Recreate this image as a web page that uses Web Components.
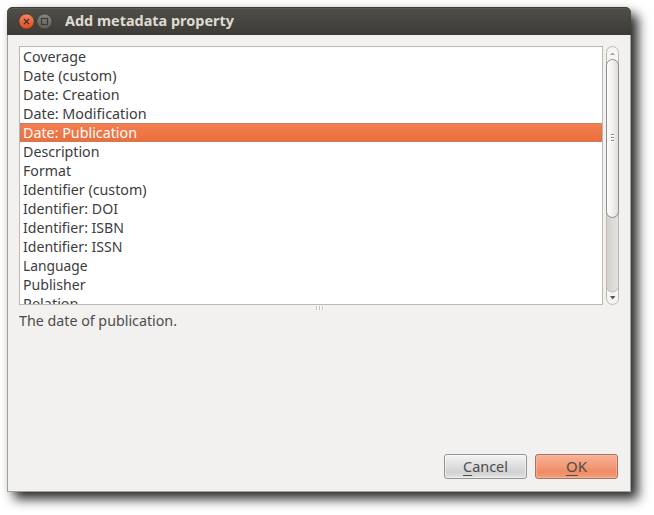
<!DOCTYPE html>
<html lang="en"><head><meta charset="utf-8"><title>Add metadata property</title>
<style>html,body{margin:0;background:#fff;width:654px;height:515px;overflow:hidden}</style></head>
<body>
<metadata-dialog></metadata-dialog>
<script>
function define(name, html, ready) {
  customElements.define(name, class extends HTMLElement {
    constructor() {
      super();
      this.attachShadow({ mode: 'open' }).innerHTML = html;
    }
    connectedCallback() { if (ready) ready(this); }
  });
}

// Text condensed or widened to the width given in the "w" attribute.
define('fit-text', `<style>
:host{display:inline-block;white-space:nowrap}
span{display:inline-block;transform-origin:0 50%}
span.u::first-letter{text-decoration:underline;text-decoration-thickness:1px;text-underline-offset:3px}
</style><span><slot></slot></span>`, el => {
  const s = el.shadowRoot.querySelector('span');
  const w = +el.getAttribute('w');
  s.textContent = el.textContent;
  if (el.hasAttribute('mnemonic')) s.className = 'u';
  el.style.width = w + 'px';
  s.style.transform = `scaleX(${w / s.getBoundingClientRect().width})`;
});

define('title-bar', `<style>
:host{display:flex;align-items:center;height:28px;box-sizing:border-box;padding:0 0 1px 11px;border-radius:6px 6px 0 0;
background:linear-gradient(#504f48,#3c3b37);box-shadow:inset 0 1px #3d3c38,inset 0 2px #5d5b54;color:#dfdbd2;font-weight:700}
svg{display:block;margin:1px 11px 0 0}
</style>
<svg width="36" height="20" viewBox="0 0 36 20"><defs>
<linearGradient id="r" x2="0" y2="1"><stop stop-color="#f58565"/><stop offset="1" stop-color="#df4b1c"/></linearGradient>
<linearGradient id="g" x2="0" y2="1"><stop stop-color="#85837b"/><stop offset="1" stop-color="#605e57"/></linearGradient></defs>
<circle cx="8.5" cy="10.5" r="7.6" fill="url(#r)" stroke="#35332f" stroke-width=".6"/>
<path d="M5.9 7.9l5.2 5.2M11.1 7.9l-5.2 5.2" stroke="#42281e" stroke-width="1.3"/>
<circle cx="26.5" cy="10.5" r="7.6" fill="url(#g)" stroke="#35332f" stroke-width=".6"/>
<rect x="23.5" y="7.5" width="6" height="6" fill="none" stroke="#3b3935" stroke-width="1.1"/></svg>
<slot></slot>`);

define('list-row', `<style>
:host{display:block;height:19px;line-height:19px;padding-left:3px;box-sizing:border-box}
:host([selected]){background:linear-gradient(#f47f50,#ec6e3c);color:#fff;outline:1px dotted #a4877b;outline-offset:-1px}
</style><slot></slot>`);

define('list-box', `<style>
:host{display:block;flex:none;box-sizing:border-box;width:584px;height:259px;border:1px solid #bbb8b3;background:#fff;overflow:hidden;color:#3c3c3c}
</style><slot></slot>`);

define('scroll-bar', `<style>
:host{display:block;flex:none;width:13px;height:259px}svg{display:block}
</style><svg width="13" height="259" viewBox="0 0 13 259"><defs>
<linearGradient id="t"><stop stop-color="#d4d1cd"/><stop offset="1" stop-color="#e4e1de"/></linearGradient>
<linearGradient id="h"><stop stop-color="#fff"/><stop offset=".5" stop-color="#f1f0ef"/><stop offset="1" stop-color="#dedddb"/></linearGradient></defs>
<rect x=".5" y=".5" width="12" height="258" rx="6" fill="#f6f5f4" stroke="#bbb8b3"/>
<path d="M.5 20h12v220a6 6 0 0 1-12 0z" fill="url(#t)" stroke="#bbb8b3"/>
<rect x=".5" y="13.5" width="12" height="158" rx="6" fill="url(#h)" stroke="#8f8b86"/>
<path d="M4 9h5L6.5 6.5z" fill="#aaa8a5"/><path d="M4 250h5.4l-2.7 3.5z" fill="#55534f"/>
<path d="M5 89.5h3M5 92.5h3M5 95.5h3" stroke="#fff"/><path d="M5 88.5h3M5 91.5h3M5 94.5h3" stroke="#8f8e8c"/></svg>`);

define('split-grip', `<style>
:host{display:flex;height:5px;padding:1px 0 0 297px;gap:1px;box-sizing:border-box}
i{width:2px;height:4px;background:linear-gradient(90deg,#c5c3c0 50%,#fff 50%)}
</style><i></i><i></i><i></i>`);

define('push-button', `<style>
:host{display:flex;box-sizing:border-box;width:83px;height:25px;border:1px solid #969490;border-radius:3px;align-items:center;justify-content:center;
background:linear-gradient(#f4f4f4,#dedede 48%,#d2d2d2 75%,#e2e2e2);box-shadow:inset 0 0 0 1px #ffffff80;color:#4c4c4c}
:host([primary]){border-color:#a37467;background:linear-gradient(#f9b094,#f29a76 50%,#ef8c64 75%,#f49f7c);box-shadow:inset 0 0 0 1px #ffc1a880}
</style><slot></slot>`);

define('metadata-dialog', `<style>
:host{display:block;box-sizing:border-box;width:654px;height:515px;padding:7px;font:14.6px/19px "Noto Sans","Open Sans",sans-serif;color:#4c4c4c}
.win{display:flex;flex-direction:column;width:624px;height:485px;border-radius:6px 6px 0 0;background:#f2f1f0;box-shadow:7px 7px 12px rgba(0,0,0,.84),0 0 5px rgba(0,0,0,.05)}
.body{flex:1;box-sizing:border-box;display:flex;flex-direction:column;padding:11px 11px 12px 11px;border:solid #a3a09a;border-width:0 1px 1px}
.top{display:flex;gap:3px}
.desc{padding-top:1px}
.actions{display:flex;justify-content:flex-end;gap:8px;margin:auto 1px 0 0}
</style>
<div class="win">
<title-bar><fit-text w="169">Add metadata property</fit-text></title-bar>
<div class="body">
<div class="top"><list-box>
<list-row><fit-text w="63">Coverage</fit-text></list-row>
<list-row><fit-text w="93.5">Date (custom)</fit-text></list-row>
<list-row><fit-text w="96.5">Date: Creation</fit-text></list-row>
<list-row><fit-text w="123.5">Date: Modification</fit-text></list-row>
<list-row selected><fit-text w="114">Date: Publication</fit-text></list-row>
<list-row><fit-text w="76.5">Description</fit-text></list-row>
<list-row><fit-text w="48">Format</fit-text></list-row>
<list-row><fit-text w="123.5">Identifier (custom)</fit-text></list-row>
<list-row><fit-text w="95">Identifier: DOI</fit-text></list-row>
<list-row><fit-text w="101">Identifier: ISBN</fit-text></list-row>
<list-row><fit-text w="99.5">Identifier: ISSN</fit-text></list-row>
<list-row><fit-text w="64.5">Language</fit-text></list-row>
<list-row><fit-text w="62.5">Publisher</fit-text></list-row>
<list-row><fit-text w="55.5">Relation</fit-text></list-row>
</list-box><scroll-bar></scroll-bar></div>
<split-grip></split-grip>
<div class="desc"><fit-text w="158">The date of publication.</fit-text></div>
<div class="actions"><push-button><fit-text mnemonic w="45">Cancel</fit-text></push-button><push-button primary><fit-text mnemonic w="21">OK</fit-text></push-button></div>
</div></div>`);
</script>
</body></html>
